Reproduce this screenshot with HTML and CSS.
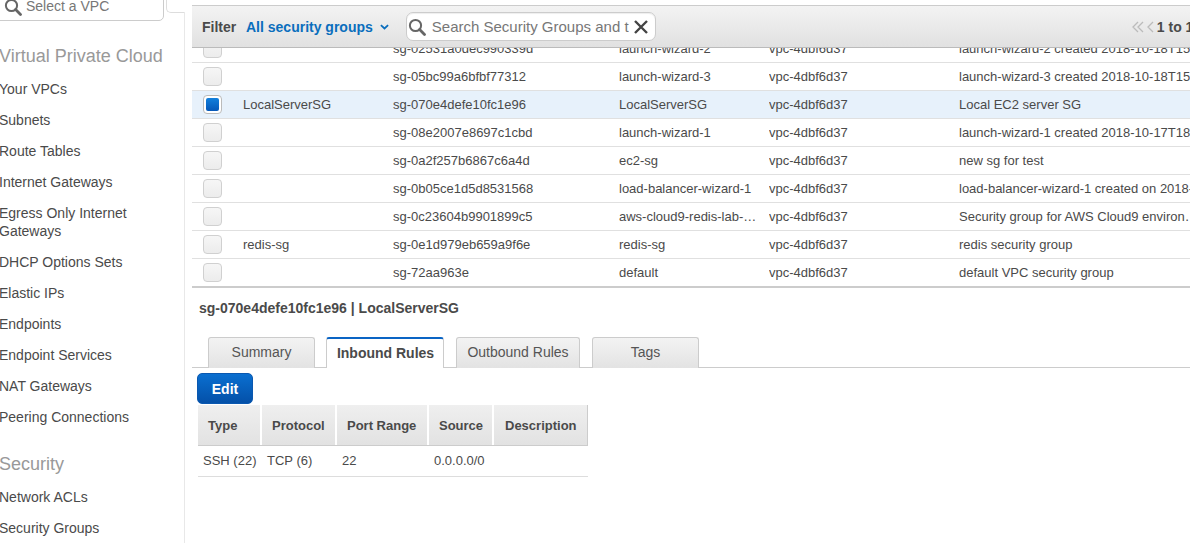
FILE: index.html
```html
<!DOCTYPE html>
<html lang="en">
<head>
<meta charset="utf-8">
<title>Security Groups</title>
<link rel="stylesheet" href="styles.css">
</head>
<body>
<div class="page">
  <aside class="sidebar">
    <div class="vpc-row">
      <div class="vpc-select">
        <svg class="vpc-icon" viewBox="0 0 18 18" width="18" height="18"><circle cx="7.5" cy="7.5" r="5.6" fill="none" stroke="#666" stroke-width="2"/><path d="M11.6 11.6 16.5 16.5" stroke="#666" stroke-width="2.8" stroke-linecap="round"/></svg>
        <span>Select a VPC</span>
      </div>
      <div class="notch"></div>
    </div>
    <nav class="nav">
      <h2 class="nav-title">Virtual Private Cloud</h2>
      <a class="nav-item">Your VPCs</a>
      <a class="nav-item">Subnets</a>
      <a class="nav-item">Route Tables</a>
      <a class="nav-item">Internet Gateways</a>
      <a class="nav-item">Egress Only Internet Gateways</a>
      <a class="nav-item">DHCP Options Sets</a>
      <a class="nav-item">Elastic IPs</a>
      <a class="nav-item">Endpoints</a>
      <a class="nav-item">Endpoint Services</a>
      <a class="nav-item">NAT Gateways</a>
      <a class="nav-item">Peering Connections</a>
      <h2 class="nav-title nav-title-second">Security</h2>
      <a class="nav-item">Network ACLs</a>
      <a class="nav-item">Security Groups</a>
    </nav>
  </aside>
  <main class="main">
    <div class="filter-bar">
      <span class="filter-label">Filter</span>
      <span class="filter-value">All security groups</span>
      <svg class="filter-chevron" viewBox="0 0 10 6" width="9" height="6"><path d="M1 1 5 4.6 9 1" fill="none" stroke="#0a6ebd" stroke-width="2"/></svg>
      <div class="search">
        <svg viewBox="0 0 18 18" width="18" height="18"><circle cx="7.5" cy="7.5" r="5.6" fill="none" stroke="#666" stroke-width="2"/><path d="M11.6 11.6 16.5 16.5" stroke="#666" stroke-width="2.8" stroke-linecap="round"/></svg>
        <span class="search-text">Search Security Groups and t</span>
        <svg class="search-x" viewBox="0 0 14 14" width="14" height="14"><path d="M1 1 13 13M13 1 1 13" stroke="#444" stroke-width="2.4"/></svg>
      </div>
      <div class="pager">
        <svg viewBox="0 0 22 12" width="22" height="12"><path d="M6 1 1 6 6 11M11 1 6 6 11 11M21 1 16 6 21 11" fill="none" stroke="#bbb" stroke-width="1.3"/></svg>
        <span>1 to 15 of 15</span>
      </div>
    </div>
    <div class="table-clip">
      <div class="rows">
        <div class="row"><span class="check"></span><span></span><span>sg-02531a0dec990339d</span><span>launch-wizard-2</span><span>vpc-4dbf6d37</span><span>launch-wizard-2 created 2018-10-18T15:</span></div>
        <div class="row"><span class="check"></span><span></span><span>sg-05bc99a6bfbf77312</span><span>launch-wizard-3</span><span>vpc-4dbf6d37</span><span>launch-wizard-3 created 2018-10-18T15:</span></div>
        <div class="row selected"><span class="check checked"></span><span>LocalServerSG</span><span>sg-070e4defe10fc1e96</span><span>LocalServerSG</span><span>vpc-4dbf6d37</span><span>Local EC2 server SG</span></div>
        <div class="row"><span class="check"></span><span></span><span>sg-08e2007e8697c1cbd</span><span>launch-wizard-1</span><span>vpc-4dbf6d37</span><span>launch-wizard-1 created 2018-10-17T18:</span></div>
        <div class="row"><span class="check"></span><span></span><span>sg-0a2f257b6867c6a4d</span><span>ec2-sg</span><span>vpc-4dbf6d37</span><span>new sg for test</span></div>
        <div class="row"><span class="check"></span><span></span><span>sg-0b05ce1d5d8531568</span><span>load-balancer-wizard-1</span><span>vpc-4dbf6d37</span><span>load-balancer-wizard-1 created on 2018-</span></div>
        <div class="row"><span class="check"></span><span></span><span>sg-0c23604b9901899c5</span><span>aws-cloud9-redis-lab-…</span><span>vpc-4dbf6d37</span><span>Security group for AWS Cloud9 environ…</span></div>
        <div class="row"><span class="check"></span><span>redis-sg</span><span>sg-0e1d979eb659a9f6e</span><span>redis-sg</span><span>vpc-4dbf6d37</span><span>redis security group</span></div>
        <div class="row last"><span class="check"></span><span></span><span>sg-72aa963e</span><span>default</span><span>vpc-4dbf6d37</span><span>default VPC security group</span></div>
      </div>
    </div>
    <section class="details">
      <h1 class="details-title">sg-070e4defe10fc1e96 | LocalServerSG</h1>
      <div class="tabs">
        <span class="tab tab-summary">Summary</span>
        <span class="tab tab-active">Inbound Rules</span>
        <span class="tab tab-outbound">Outbound Rules</span>
        <span class="tab tab-tags">Tags</span>
      </div>
      <button class="edit" type="button">Edit</button>
      <div class="rules">
        <div class="rules-head">
          <span class="c1">Type</span><span class="c2">Protocol</span><span class="c3">Port Range</span><span class="c4">Source</span><span class="c5">Description</span>
        </div>
        <div class="rules-row">
          <span class="c1">SSH (22)</span><span class="c2">TCP (6)</span><span class="c3">22</span><span class="c4">0.0.0.0/0</span><span class="c5"></span>
        </div>
      </div>
    </section>
  </main>
</div>
</body>
</html>
```
FILE: styles.css
```css
* { box-sizing: border-box; }
html, body { margin: 0; padding: 0; height: 100%; overflow: hidden; background: #fff; }
body { font-family: "Liberation Sans", Arial, sans-serif; color: #4a4a4a; }
.page { display: flex; width: 1190px; height: 543px; overflow: hidden; }

/* Sidebar */
.sidebar { flex: none; width: 192px; display: flex; flex-direction: column; }
.vpc-row { display: flex; height: 21px; flex: none; }
.vpc-select { width: 176px; margin-left: -12px; margin-top: -16px; height: 37px; border: 1px solid #ccc; border-radius: 5px; display: flex; align-items: center; gap: 4px; padding: 8px 0 0 16px; font-size: 14px; color: #777; background: #fff; flex: none; }
.vpc-icon { flex: none; margin-top: 0; margin-left: -1px; }
.vpc-select span { margin-top: -2px; }
.notch { width: 19px; height: 13px; margin-left: 2px; border-left: 1px solid #ddd; border-bottom: 1px solid #ddd; border-bottom-left-radius: 5px; flex: none; }
.nav { width: 185px; flex: 1; border-right: 1px solid #e8e8e8; margin-top: -9px; padding-top: 33px; }
.nav-title { margin: 0 0 7px -1px; font-size: 18px; line-height: 22px; font-weight: 400; color: #999; white-space: nowrap; }
.nav-title-second { margin-top: 20px; margin-bottom: 7px; }
.nav-item { display: block; font-size: 14px; line-height: 18px; padding: 6px 20px 7px 0; margin-left: -1px; color: #4a4a4a; }

/* Main */
.main { flex: 1; min-width: 0; display: flex; flex-direction: column; }
.filter-bar { flex: none; margin-top: 5px; height: 43px; width: 1000px; display: flex; align-items: center; padding-left: 10px; background: linear-gradient(#f3f3f3, #e1e1e1); border-top: 1px solid #ccc; border-bottom: 1px solid #bbb; white-space: nowrap; position: relative; z-index: 1; }
.filter-label { font-size: 14px; font-weight: 700; color: #4a4a4a; width: 44px; flex: none; }
.filter-value { font-size: 14px; font-weight: 700; color: #0a6ebd; }
.filter-chevron { margin-left: 7px; flex: none; }
.search { margin-left: 17px; width: 250px; height: 29px; flex: none; background: #fff; border: 1px solid #ccc; border-radius: 7px; display: flex; align-items: center; padding-left: 1px; box-shadow: inset 0 1px 1px #eee; }
.search svg { flex: none; }
.search-text { margin-left: 6px; width: 197px; overflow: hidden; font-size: 15px; color: #777; }
.search-x { margin-left: 5px; }
.pager { margin-left: 476px; display: flex; align-items: center; gap: 3px; font-size: 14px; font-weight: 700; color: #4a4a4a; flex: none; }

.table-clip { flex: none; height: 240px; overflow: hidden; }
.rows { margin-top: -13px; }
.row { display: grid; grid-template-columns: 51px 150px 226px 150px 190px 300px; align-items: center; height: 28px; border-bottom: 1px solid #e0e0e0; font-size: 13px; color: #4a4a4a; padding: 0; white-space: nowrap; width: 1067px; }
.row > span { overflow: hidden; }
.row.selected { background: #e7f1fb; }
.row.last { height: 29px; padding-bottom: 1px; border-bottom: 2px solid #ccc; }
.check { display: block; width: 19px; height: 19px; margin-left: 11px; border: 1px solid #d0d0d0; border-radius: 4px; background: linear-gradient(#f6f6f6, #ececec); }
.check.checked { background: #fff; border-color: #bbb; position: relative; padding: 2px; }
.check.checked::after { content: ""; display: block; width: 13px; height: 13px; border-radius: 2px; background: linear-gradient(#1280dc, #0557b8); }

/* Details */
.details { flex: none; }
.details-title { margin: 12px 0 0 7px; font-size: 14px; line-height: 16px; font-weight: 700; color: #4a4a4a; white-space: nowrap; }
.tabs { margin-top: 21px; height: 31px; border-bottom: 1px solid #ccc; display: flex; padding-left: 16px; font-size: 14px; }
.tab { height: 31px; border: 1px solid #ccc; border-bottom: none; border-radius: 3px 3px 0 0; background: linear-gradient(#f3f3f3, #e3e3e3); color: #555; text-align: center; line-height: 28px; flex: none; }
.tab-summary { width: 107px; margin-right: 11px; }
.tab-active { width: 118px; margin-right: 12px; background: #fff; border-top: 2px solid #0a64c4; height: 31px; font-weight: 700; color: #4a4a4a; line-height: 29px; position: relative; padding-left: 1px; }
.tab-outbound { width: 124px; margin-right: 12px; }
.tab-tags { width: 107px; }
.edit { display: block; margin: 5px 0 0 5px; width: 56px; height: 31px; border: 1px solid #0a58b0; border-radius: 5px; background: linear-gradient(#0a6fd0, #0450a8); color: #fff; font-family: inherit; font-size: 14px; font-weight: 700; padding: 0; }
.rules { width: 390px; margin: 1px 0 0 6px; }
.rules-head { display: flex; height: 41px; background: linear-gradient(#efefef, #e2e2e2); border-bottom: 1px solid #ccc; font-size: 13px; font-weight: 700; color: #4a4a4a; }
.rules-head span { display: flex; align-items: center; border-right: 2px solid #fff; padding-left: 10px; }
.rules-head .c5 { border-right: 1px solid #ccc; padding-left: 11px; }
.rules-row { display: flex; height: 31px; padding-bottom: 2px; border-bottom: 1px solid #ddd; font-size: 13px; color: #4a4a4a; }
.rules-row span { display: flex; align-items: center; padding-left: 5px; white-space: nowrap; }
.c1 { width: 64px; flex: none; }
.c2 { width: 75px; flex: none; }
.c3 { width: 92px; flex: none; }
.c4 { width: 65px; flex: none; }
.c5 { width: 94px; flex: none; }
```
